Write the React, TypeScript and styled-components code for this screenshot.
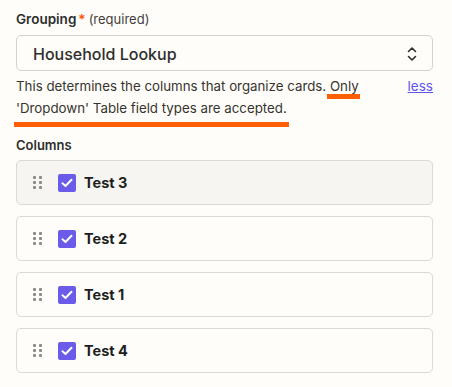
import React from "react";
import styled, { createGlobalStyle } from "styled-components";

const GlobalStyle = createGlobalStyle`
  body {
    margin: 0;
    background: #fffdf9;
    font-family: Inter, "Noto Sans", Arial, sans-serif;
    color: #2d2e2e;
  }
`;

const Panel = styled.div`
  width: 452px;
  height: 387px;
  box-sizing: border-box;
  padding: 9px 19px 0 16px;
  display: flex;
  flex-direction: column;
`;

const Label = styled.div`
  font-size: 13.5px;
  line-height: 20px;
  font-weight: 600;
  color: #2d2e2e;
`;

const Star = styled.span`
  color: #ff4f00;
  margin: 0 3px 0 2px;
`;

const Hint = styled.span`
  font-weight: 400;
  font-size: 13px;
  color: #403f3e;
`;

const Select = styled.div`
  margin-top: 6px;
  height: 36px;
  box-sizing: border-box;
  border: 1px solid #d5d2cb;
  border-radius: 5px;
  background: #fffdf9;
  display: flex;
  align-items: center;
  justify-content: space-between;
  padding: 1px 12px 0 16px;
  font-size: 16px;
  font-weight: 500;
  color: #2d2e2e;
`;

const HelpRow = styled.div`
  display: flex;
  align-items: flex-start;
  justify-content: space-between;
  margin-top: 4px;
  font-size: 13.3px;
  line-height: 22px;
  color: #36342f;
`;

const HelpText = styled.div`
  flex: 1;
  padding-right: 36px;
`;

const Marked = styled.span<{ $left: number; $right: number; $top: number }>`
  position: relative;
  &::after {
    content: "";
    position: absolute;
    left: ${(p) => p.$left}px;
    right: ${(p) => p.$right}px;
    top: ${(p) => p.$top}px;
    height: 5px;
    background: #ff5f00;
  }
`;

const LessLink = styled.a`
  color: #5f55ee;
  text-decoration: underline;
  font-size: 13.5px;
  cursor: pointer;
`;

const ColumnsLabel = styled(Label)`
  margin-top: 16px;
  font-size: 13px;
`;

const List = styled.div`
  margin-top: 5px;
  display: flex;
  flex-direction: column;
  gap: 11px;
`;

const Row = styled.div<{ $active?: boolean }>`
  height: 45px;
  box-sizing: border-box;
  border: 1px solid #dcd9d2;
  border-radius: 5px;
  background: ${(p) => (p.$active ? "#f7f5f1" : "#fffdf9")};
  display: flex;
  align-items: center;
  padding-left: 16px;
`;

const Handle = styled.div`
  display: grid;
  grid-template-columns: repeat(2, 2.5px);
  grid-auto-rows: 2.5px;
  column-gap: 3.5px;
  row-gap: 2.5px;
  width: 8px;
  span {
    width: 2.5px;
    height: 2.5px;
    border-radius: 1px;
    background: #8c8a86;
  }
`;

const Check = styled.div`
  margin-left: 17px;
  width: 18px;
  height: 18px;
  border-radius: 2px;
  background: #6a5ce9;
  display: flex;
  align-items: center;
  justify-content: center;
`;

const RowTitle = styled.span`
  margin-left: 8px;
  font-size: 14.5px;
  font-weight: 700;
  color: #201f1e;
`;

const Chevrons = () => (
  <svg width="16" height="18" viewBox="0 0 16 18" fill="none">
    <path d="M4.5 6.5L8 3l3.5 3.5" stroke="#2d2e2e" strokeWidth="1.6" strokeLinecap="round" strokeLinejoin="round" />
    <path d="M4.5 11.5L8 15l3.5-3.5" stroke="#2d2e2e" strokeWidth="1.6" strokeLinecap="round" strokeLinejoin="round" />
  </svg>
);

const Tick = () => (
  <svg width="12" height="10" viewBox="0 0 12 10" fill="none">
    <path d="M1.5 5.2L4.5 8L10.5 1.8" stroke="#fff" strokeWidth="2" strokeLinecap="round" strokeLinejoin="round" />
  </svg>
);

const columns = ["Test 3", "Test 2", "Test 1", "Test 4"];

export default function App() {
  return (
    <>
      <GlobalStyle />
      <Panel>
        <Label>
          Grouping<Star>*</Star>
          <Hint>(required)</Hint>
        </Label>
        <Select>
          <span>Household Lookup</span>
          <Chevrons />
        </Select>
        <HelpRow>
          <HelpText>
            This determines the columns that organize cards.{" "}
            <Marked $left={-3} $right={-1} $top={16}>Only</Marked>{" "}
            <Marked $left={-2} $right={-2} $top={22}>'Dropdown' Table field types are accepted.</Marked>
          </HelpText>
          <LessLink>less</LessLink>
        </HelpRow>
        <ColumnsLabel>Columns</ColumnsLabel>
        <List>
          {columns.map((name, i) => (
            <Row key={name} $active={i === 0}>
              <Handle>
                {Array.from({ length: 6 }).map((_, j) => (
                  <span key={j} />
                ))}
              </Handle>
              <Check>
                <Tick />
              </Check>
              <RowTitle>{name}</RowTitle>
            </Row>
          ))}
        </List>
      </Panel>
    </>
  );
}
